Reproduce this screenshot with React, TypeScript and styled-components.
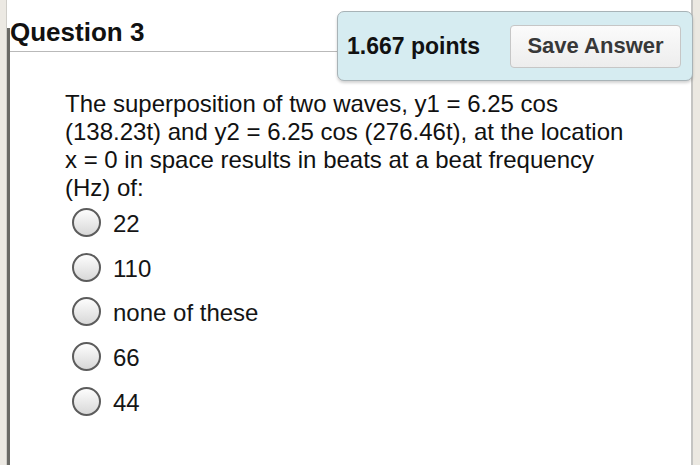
import React from 'react';
import styled, { createGlobalStyle } from 'styled-components';

const options = ['22', '110', 'none of these', '66', '44'];

const GlobalStyle = createGlobalStyle`
  html, body {
    margin: 0;
    padding: 0;
    background: #ebe8e1;
  }
  body {
    font-family: 'Liberation Sans', Arial, Helvetica, sans-serif;
    color: #111;
  }
`;

const App = () => {
  return (
    <>
      <GlobalStyle />
      <Frame>
        <LeftStrip />
        <Sheet>
          <Header>Question 3</Header>
          <PointsBox>
            <Points>1.667 points</Points>
            <SaveButton type="button">Save Answer</SaveButton>
          </PointsBox>
          <Prompt>
            The superposition of two waves, y1 = 6.25 cos (138.23t) and y2 = 6.25 cos (276.46t), at the
            location x = 0 in space results in beats at a beat frequency (Hz) of:
          </Prompt>
          <OptionList>
            {options.map((o) => (
              <OptionRow key={o}>
                <RadioCircle />
                <OptionLabel>{o}</OptionLabel>
              </OptionRow>
            ))}
          </OptionList>
        </Sheet>
      </Frame>
    </>
  );
};

const Frame = styled.div`
  display: flex;
  width: 700px;
  height: 465px;
  overflow: hidden;
`;

const LeftStrip = styled.div`
  width: 6px;
  background: #ece9e3;
  border-right: 1px solid #cfcdc8;
`;

const Sheet = styled.div`
  position: relative;
  width: 686px;
  box-sizing: border-box;
  background: #fff;
  border-right: 2px solid #c4c4c2;

  &::before {
    content: '';
    position: absolute;
    left: 0;
    top: 28px;
    bottom: 0;
    width: 3px;
    background: #6a6a66;
  }
`;

const Header = styled.div`
  margin-left: 3px;
  padding-top: 17px;
  padding-bottom: 4px;
  font-size: 26px;
  line-height: 30px;
  font-weight: 700;
  color: #111;
  border-bottom: 1px solid #b9b9b9;
`;

const PointsBox = styled.div`
  position: absolute;
  left: 330px;
  top: 11px;
  width: 356px;
  height: 70px;
  box-sizing: border-box;
  display: flex;
  align-items: center;
  justify-content: space-between;
  padding: 0 11px 0 9px;
  background: #d6ecf1;
  border: 1px solid #a8b3b7;
  border-radius: 7px;
  box-shadow: 0 2px 3px rgba(0, 0, 0, 0.18);
`;

const Points = styled.span`
  font-size: 23px;
  font-weight: 700;
  color: #111;
`;

const SaveButton = styled.button`
  width: 171px;
  height: 43px;
  font-family: inherit;
  font-size: 22px;
  font-weight: 700;
  color: #383838;
  background: linear-gradient(#fbfbfb, #ededed);
  border: 1px solid #c6c6c6;
  border-radius: 4px;
  padding: 0;
`;

const Prompt = styled.p`
  margin: 38px 0 0 58px;
  width: 576px;
  font-size: 24px;
  line-height: 28px;
  color: #111;
`;

const OptionList = styled.div`
  margin: -2px 0 0 65px;
  display: flex;
  flex-direction: column;
`;

const OptionRow = styled.div`
  display: flex;
  align-items: center;
  height: 44.75px;
  gap: 12px;
`;

const RadioCircle = styled.span`
  width: 29px;
  height: 29px;
  box-sizing: border-box;
  border-radius: 50%;
  border: 2px solid #5c5c5c;
  background: linear-gradient(#fdfdfd, #d8d8d8);
`;

const OptionLabel = styled.span`
  padding-top: 3px;
  font-size: 24px;
  color: #151515;
`;

export default App;
